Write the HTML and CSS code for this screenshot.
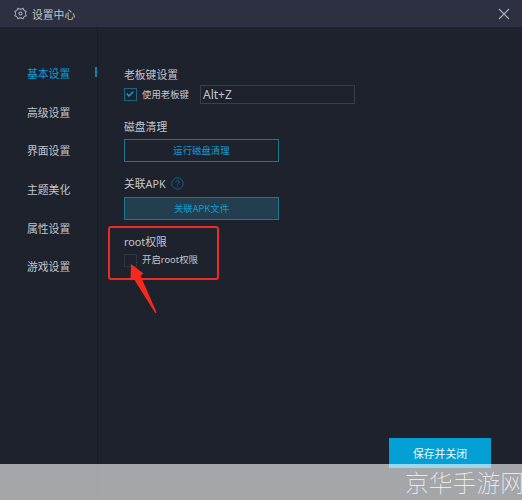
FILE: index.html
```
<!DOCTYPE html>
<html lang="zh-CN">
<head>
<meta charset="utf-8">
<title>设置中心</title>
<link rel="stylesheet" href="styles.css">
</head>
<body>
<div class="window">
  <header class="titlebar">
    <svg class="gear" viewBox="0 0 14 14" width="13" height="13"><path d="M4.3 1.4Q7 3.2 9.7 1.4L10.7 3.3Q11 4.2 13 4.7Q11.4 7 13 9.3Q11 9.8 10.7 10.7L9.7 12.6Q7 10.8 4.3 12.6L3.3 10.7Q3 9.8 1 9.3Q2.6 7 1 4.7Q3 4.2 3.3 3.3Z"/><circle cx="7" cy="7" r="1.7"/></svg>
    <span class="name">设置中心</span>
    <svg class="close" viewBox="0 0 12 12" width="12" height="12"><path d="M1 1L11 11M11 1L1 11"/></svg>
  </header>
  <div class="main">
    <nav class="sidebar">
      <a class="item active">基本设置</a>
      <a class="item">高级设置</a>
      <a class="item">界面设置</a>
      <a class="item">主题美化</a>
      <a class="item">属性设置</a>
      <a class="item">游戏设置</a>
    </nav>
    <div class="page">
      <main class="content">
        <section class="group boss">
          <h2>老板键设置</h2>
          <div class="row">
            <span class="check"><svg viewBox="0 0 12 12" width="12" height="12"><path d="M2.6 5.5L5 8L9.2 3.8"/></svg></span>
            <span class="label">使用老板键</span>
            <div class="field">Alt+Z</div>
          </div>
        </section>
        <section class="group disk">
          <h2>磁盘清理</h2>
          <div class="button">运行磁盘清理</div>
        </section>
        <section class="group apk">
          <h2>关联APK<svg class="help" viewBox="0 0 13 13" width="13" height="13"><circle cx="6.5" cy="6.5" r="5.7"/><path d="M4.8 5.2Q4.8 3.5 6.5 3.5T8.2 5.1Q8.2 5.9 7.1 6.5Q6.5 6.9 6.5 7.8M6.5 8.8V9.8"/></svg></h2>
          <div class="button filled">关联APK文件</div>
        </section>
        <section class="group root">
          <h2>root权限</h2>
          <div class="row">
            <span class="check empty"></span>
            <span class="label">开启root权限</span>
          </div>
          <div class="highlight"></div>
          <svg class="arrow" viewBox="0 0 32 54" width="32" height="54"><path d="M3 2L15.5 11.4L12.6 13.8L28.6 50.4L27.4 51.2L6 17.2L2.5 18.4Z"/></svg>
        </section>
      </main>
      <footer class="footer"><div class="save">保存并关闭</div></footer>
    </div>
  </div>
  <div class="watermark">京华手游网</div>
</div>
</body>
</html>
```
FILE: styles.css
```
* { box-sizing: border-box; }
body { margin: 0; background: #1e222c; font-family: "Noto Sans CJK SC", sans-serif; color: #c3c6cc; }
.window { position: relative; display: flex; flex-direction: column; width: 522px; height: 500px; overflow: hidden; background: #1e222c; }
.titlebar { display: flex; align-items: center; flex: none; height: 27px; padding: 0 12px 0 14px; background: #2c3040; font-size: 10.8px; }
.gear, .close { fill: none; stroke: #a9afbc; stroke-width: 1.1; }
.gear { margin: 0 5px 1px 0; }
.name { padding-top: 1px; line-height: 16px; }
.close { margin-left: auto; }
.main { display: flex; flex: 1; }
.sidebar { flex: none; width: 98px; padding-top: 27px; border-right: 1px solid #191d26; }
.item { display: flex; align-items: center; height: 38.6px; padding-left: 27px; font-size: 10.8px; white-space: nowrap; }
.active { color: #109ed5; }
.active::after { content: ""; flex: none; width: 2px; height: 10px; margin: -2px 0 0 25px; background: #157fab; }
.page { display: flex; flex-direction: column; flex: 1; }
.content { flex: 1; padding: 39px 0 0 26px; }
.group { position: relative; }
h2 { display: flex; align-items: center; height: 15px; margin: 0; font-family: "Noto Sans", "Noto Sans CJK SC", sans-serif; font-size: 10.8px; font-weight: 400; }
.boss { height: 52px; }
.disk { height: 57.5px; }
.apk { height: 58px; }
.row { display: flex; align-items: center; height: 19px; margin-top: 4px; }
.root .row { margin-top: 2px; }
.check { display: flex; width: 13px; height: 13px; border: 1px solid #176785; }
.check svg { margin: -1px; fill: none; stroke: #189fd0; stroke-width: 1.4; }
.empty { border-color: #303641; }
.label { margin-left: 5px; width: 58px; font-family: "Noto Sans", "Noto Sans CJK SC", sans-serif; font-size: 9.4px; line-height: 14px; white-space: nowrap; }
.field { width: 155px; height: 19px; padding-left: 2px; border: 1px solid #393e48; font: 12px/18px "Noto Sans", sans-serif; }
.button { display: flex; align-items: center; justify-content: center; width: 155px; height: 23px; margin-top: 6px; padding-bottom: 1px; border: 1px solid #187991; color: #169bd2; font-size: 9.4px; }
.filled { background: #233e4f; }
.help { margin-left: 5px; fill: none; stroke: #175e80; stroke-width: 1; }
.highlight { position: absolute; left: -16px; top: -7.5px; width: 111px; height: 54px; border: 2px solid #ec2b26; border-radius: 3px; }
.arrow { position: absolute; left: 4px; top: 28.5px; fill: #f7291f; }
.footer { display: flex; justify-content: flex-end; flex: none; height: 62px; padding-right: 31px; }
.save { display: flex; align-items: center; justify-content: center; width: 102px; height: 30px; background: #02a0d5; color: #eefaff; font-size: 10.8px; }
.watermark { position: absolute; left: 0; right: 0; bottom: 0; height: 36px; padding: 0 0 0 405px; background: rgba(255, 255, 255, .6); color: #f5f5f6; font-size: 23.8px; font-weight: 100; line-height: 35px; white-space: nowrap; }
```
